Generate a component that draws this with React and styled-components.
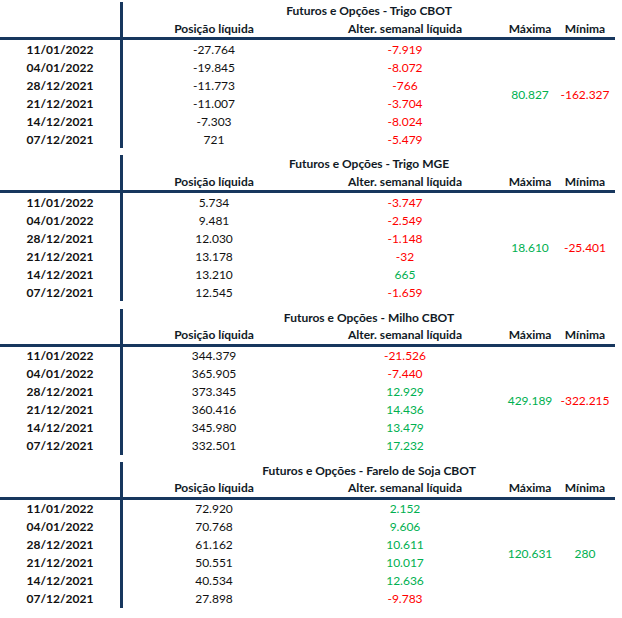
import React from "react";
import styled, { createGlobalStyle } from "styled-components";

const GlobalStyle = createGlobalStyle`
  html, body {
    margin: 0;
    padding: 0;
    background: #fff;
  }
  body {
    font-family: Lato, "Open Sans", sans-serif;
    font-size: 12px;
    color: #111;
  }
`;

const NAVY = "#17375e";
const RED = "#ff0000";
const GREEN = "#00b050";

const Page = styled.div`
  width: 622px;
  padding-top: 2px;
`;

const Block = styled.div`
  display: grid;
  grid-template-columns: 120px 3px 182px 200px 50px 60px;
  grid-template-rows: 17px 18px 3px repeat(6, 18px);
  margin-bottom: 7.33px;
  width: 615px;
`;

const VLine = styled.div`
  grid-column: 2;
  grid-row: 1 / 10;
  background: ${NAVY};
  z-index: 1;
`;

const HLine = styled.div`
  grid-column: 1 / 7;
  grid-row: 3;
  background: ${NAVY};
`;

const Title = styled.div`
  grid-column: 3 / 7;
  grid-row: 1;
  display: flex;
  align-items: center;
  justify-content: center;
  font-weight: 700;
  color: #111a26;
`;

const Head = styled.div`
  grid-column: ${(p) => p.col};
  grid-row: 2;
  display: flex;
  align-items: center;
  justify-content: center;
  font-weight: 700;
  color: #111a26;
  white-space: nowrap;
`;

const Cell = styled.div`
  grid-column: ${(p) => p.col};
  grid-row: ${(p) => p.row};
  display: flex;
  align-items: center;
  justify-content: center;
  white-space: nowrap;
  font-weight: ${(p) => (p.bold ? 700 : 400)};
  color: ${(p) => (p.tone === "red" ? RED : p.tone === "green" ? GREEN : "#111")};
`;

const Range = styled(Cell)`
  grid-row: 4 / 10;
`;

const dates = ["11/01/2022", "04/01/2022", "28/12/2021", "21/12/2021", "14/12/2021", "07/12/2021"];

const tables = [
  {
    name: "Trigo CBOT",
    pos: ["-27.764", "-19.845", "-11.773", "-11.007", "-7.303", "721"],
    alt: ["-7.919", "-8.072", "-766", "-3.704", "-8.024", "-5.479"],
    max: "80.827",
    min: "-162.327",
  },
  {
    name: "Trigo MGE",
    pos: ["5.734", "9.481", "12.030", "13.178", "13.210", "12.545"],
    alt: ["-3.747", "-2.549", "-1.148", "-32", "665", "-1.659"],
    max: "18.610",
    min: "-25.401",
  },
  {
    name: "Milho CBOT",
    pos: ["344.379", "365.905", "373.345", "360.416", "345.980", "332.501"],
    alt: ["-21.526", "-7.440", "12.929", "14.436", "13.479", "17.232"],
    max: "429.189",
    min: "-322.215",
  },
  {
    name: "Farelo de Soja CBOT",
    pos: ["72.920", "70.768", "61.162", "50.551", "40.534", "27.898"],
    alt: ["2.152", "9.606", "10.611", "10.017", "12.636", "-9.783"],
    max: "120.631",
    min: "280",
  },
];

const tone = (v) => (v.startsWith("-") ? "red" : "green");

function Table({ data }) {
  return (
    <Block>
      <VLine />
      <Title>Futuros e Opções - {data.name}</Title>
      <Head col={3}>Posição líquida</Head>
      <Head col={4}>Alter. semanal líquida</Head>
      <Head col={5}>Máxima</Head>
      <Head col={6}>Mínima</Head>
      <HLine />
      {dates.map((d, i) => (
        <React.Fragment key={d}>
          <Cell col={1} row={i + 4} bold>
            {d}
          </Cell>
          <Cell col={3} row={i + 4}>
            {data.pos[i]}
          </Cell>
          <Cell col={4} row={i + 4} tone={tone(data.alt[i])}>
            {data.alt[i]}
          </Cell>
        </React.Fragment>
      ))}
      <Range col={5} tone={tone(data.max)}>
        {data.max}
      </Range>
      <Range col={6} tone={tone(data.min)}>
        {data.min}
      </Range>
    </Block>
  );
}

export default function App() {
  return (
    <Page>
      <GlobalStyle />
      {tables.map((t) => (
        <Table key={t.name} data={t} />
      ))}
    </Page>
  );
}
